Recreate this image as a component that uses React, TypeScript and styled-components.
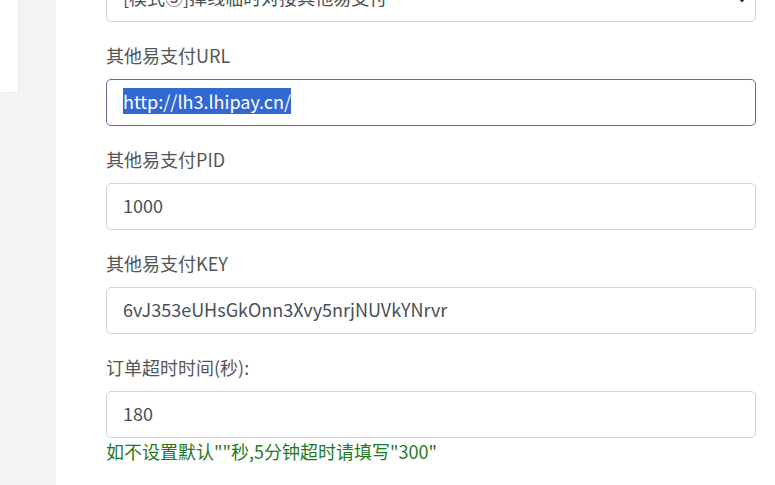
import { useEffect, useRef } from 'react';
import styled, { createGlobalStyle } from 'styled-components';

const GlobalStyle = createGlobalStyle`
  html, body {
    margin: 0;
    padding: 0;
    background: #f2f2f2;
    font-family: "Noto Sans CJK SC", "Microsoft YaHei", sans-serif;
    overflow: hidden;
  }
`;

const Page = styled.div`
  display: flex;
  height: 485px;
  overflow: hidden;
`;

const Side = styled.div`
  width: 56px;
  flex-shrink: 0;
  background: #f3f3f3;
`;

const SideCard = styled.div`
  width: 18px;
  height: 92px;
  background: #fff;
  border-bottom-right-radius: 2px;
  box-shadow: 1px 1px 1px rgba(0, 0, 0, .03);
`;

const Main = styled.div`
  flex: 1;
  background: #fff;
  padding: 0 19px 0 50px;
`;

const Form = styled.div`
  margin-top: -25px;
`;

const Group = styled.div`
  margin-bottom: 21px;
`;

const Label = styled.label`
  display: block;
  font-size: 18px;
  line-height: 27px;
  color: #555;
  margin: -1px 0 10px;
  white-space: nowrap;
`;

const Input = styled.input<{ $focus?: boolean }>`
  display: block;
  box-sizing: border-box;
  width: 100%;
  height: 47px;
  padding: 0 16px 3px;
  font-family: inherit;
  font-size: 18px;
  line-height: 27px;
  color: #495057;
  background: #fff;
  border: 1px solid ${p => (p.$focus ? '#6d6897' : '#ced4da')};
  border-radius: 5px;
  outline: none;

  &::selection {
    background: #3168d3;
    color: #fff;
  }
`;

const Select = styled.select`
  display: block;
  box-sizing: border-box;
  width: 100%;
  height: 47px;
  padding: 0 40px 3px 16px;
  font-family: inherit;
  font-size: 18px;
  color: #495057;
  background: #fff url("data:image/svg+xml,%3Csvg xmlns='http://www.w3.org/2000/svg' width='10' height='10' viewBox='0 0 10 10'%3E%3Cpath d='M1 3l4 4 4-4' fill='none' stroke='%23333' stroke-width='2'/%3E%3C/svg%3E") no-repeat right 8px center;
  border: 1px solid #ced4da;
  border-radius: 5px;
  appearance: none;
  outline: none;
`;

const Help = styled.div`
  margin-top: 1px;
  font-size: 18px;
  line-height: 24px;
  color: #1f7a1f;
  white-space: nowrap;
`;

const fields = [
  { label: '其他易支付PID', value: '1000' },
  { label: '其他易支付KEY', value: '6vJ353eUHsGkOnn3Xvy5nrjNUVkYNrvr' },
];

const App = () => {
  const urlRef = useRef<HTMLInputElement>(null);

  useEffect(() => {
    const el = urlRef.current;
    if (el) {
      el.focus();
      el.setSelectionRange(0, el.value.length);
    }
  }, []);

  return (
    <>
      <GlobalStyle />
      <Page>
        <Side>
          <SideCard />
        </Side>
        <Main>
          <Form>
            <Group>
              <Select defaultValue="3">
                <option value="3">[模式③]掉线临时对接其他易支付</option>
              </Select>
            </Group>
            <Group>
              <Label>其他易支付URL</Label>
              <Input ref={urlRef} $focus defaultValue="http://lh3.lhipay.cn/" />
            </Group>
            {fields.map(f => (
              <Group key={f.label}>
                <Label>{f.label}</Label>
                <Input defaultValue={f.value} />
              </Group>
            ))}
            <Group>
              <Label>订单超时时间(秒):</Label>
              <Input defaultValue="180" />
              <Help>如不设置默认""秒,5分钟超时请填写"300"</Help>
            </Group>
          </Form>
        </Main>
      </Page>
    </>
  );
};

export default App;
